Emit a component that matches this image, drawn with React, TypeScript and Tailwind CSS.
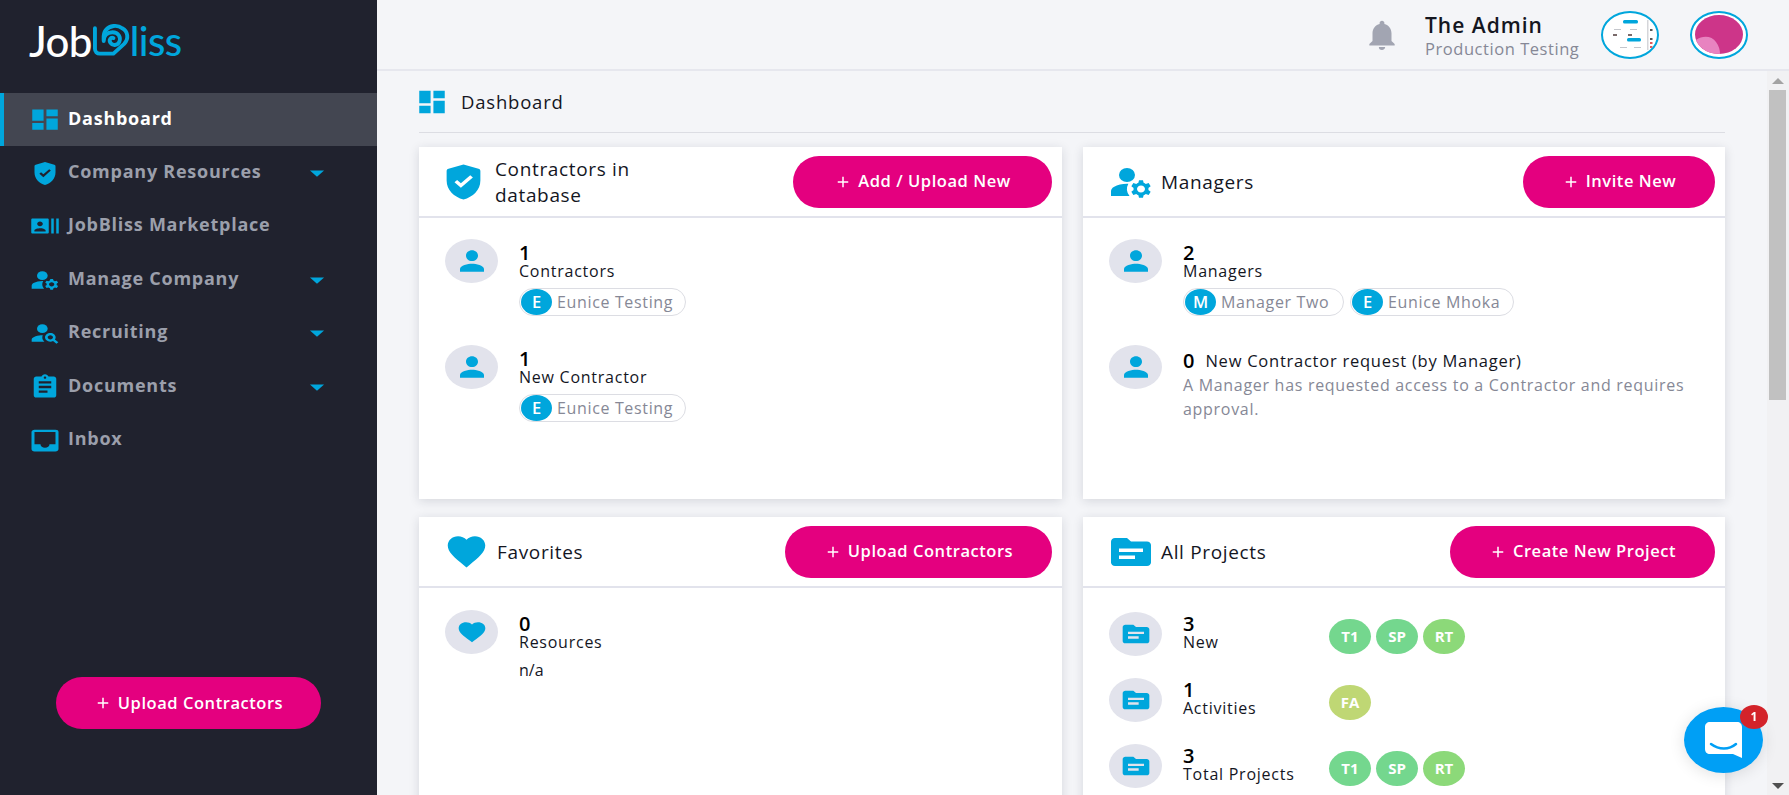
import React from "react";
import { MdDashboard, MdRecentActors, MdManageAccounts, MdPersonSearch, MdAssignment, MdInbox, MdArrowDropDown, MdNotifications, MdPerson, MdFavorite, MdTopic, MdAdd } from "react-icons/md";

const font = { fontFamily: '"Open Sans", "Noto Sans", sans-serif' };

function ShieldCheck(props: any) {
  return (
    <svg {...props} fill="currentColor">
      <path fillRule="evenodd" d="M12 1L20 3.6C20.6 3.8 21 4.3 21 5V11C21 17 17 21.5 12 23C7 21.5 3 17 3 11V5C3 4.3 3.4 3.8 4 3.6ZM10.6 15.6L7.2 12.2L8.6 10.8L10.6 12.8L15.6 7.8L17 9.2Z" />
    </svg>
  );
}

function Icon({ I, w, h, cls = "text-[#00a6dc]" }: { I: any; w: number; h: number; cls?: string }) {
  return <I preserveAspectRatio="none" viewBox="0 0 24 24" style={{ width: w, height: h }} className={`shrink-0 ${cls}`} />;
}

function NavItem({ I, label, active, arrow, w = 32, h = 28 }: { I: any; label: string; active?: boolean; arrow?: boolean; w?: number; h?: number }) {
  return (
    <div className={`relative flex h-[53.4px] items-center pl-[24px] ${active ? "bg-[#434651]" : ""}`}>
      {active && <div className="absolute inset-y-0 left-0 w-[4px] bg-[#00a6dc]" />}
      <div className="flex w-[44px] items-center justify-center pr-[3px]">
        <Icon I={I} w={w} h={h} />
      </div>
      <span className={`pb-[3px] text-[18px] font-bold tracking-[0.75px] ${active ? "text-white" : "text-[#9b9fab]"}`}>{label}</span>
      {arrow && (
        <div className="absolute left-[300px] top-1/2 -translate-y-1/2">
          <Icon I={MdArrowDropDown} w={34} h={30} />
        </div>
      )}
    </div>
  );
}

function PinkButton({ label, w }: { label: string; w: number }) {
  return (
    <button style={{ width: w }} className="flex h-[52px] shrink-0 items-center justify-center gap-[6px] rounded-full bg-[#e4007f] text-[16.5px] font-semibold tracking-[0.55px] text-white">
      <MdAdd className="h-[18px] w-[18px]" />
      {label}
    </button>
  );
}

function Circle({ I }: { I: any }) {
  const size = I === MdPerson ? [36, 32] : I === MdFavorite ? [32, 26] : [32, 28];
  return (
    <div className="flex h-[44px] w-[53px] shrink-0 items-center justify-center rounded-[50%] bg-[#e2e3ec]">
      <Icon I={I} w={size[0]} h={size[1]} />
    </div>
  );
}

function Chip({ letter, name, w }: { letter: string; name: string; w: number }) {
  return (
    <div style={{ width: w }} className="flex h-[28px] items-center rounded-full border border-[#dcdde3] pl-[1px]">
      <div className="flex h-[26px] w-[31px] items-center justify-center rounded-[50%] bg-[#00a6dc] text-[16.5px] font-semibold text-white">{letter}</div>
      <span className="ml-[5px] whitespace-nowrap text-[16px] tracking-[0.65px] text-[#868896]">{name}</span>
    </div>
  );
}

function Stat({ I, n, label, tight, children }: { I: any; n: string; label: string; tight?: boolean; children?: React.ReactNode }) {
  return (
    <div className="flex gap-[21px]">
      <Circle I={I} />
      <div className={tight ? "pt-[2px]" : "pt-[4px]"}>
        <div className="text-[20px] font-semibold leading-[19px] text-black">{n}</div>
        <div className="whitespace-nowrap text-[16px] leading-[19px] tracking-[0.75px] text-[#14161f]">{label}</div>
        {children}
      </div>
    </div>
  );
}

function Card({ title, I, iw, ih, gap, btn, btnW, px, children, titleCls = "" }: { title: string; I: any; iw: number; ih: number; gap: number; btn: string; btnW: number; px: number; children: React.ReactNode; titleCls?: string }) {
  return (
    <div className="h-[352px] bg-white shadow-[0_2px_10px_rgba(30,35,60,0.14)]">
      <div className="flex h-[71px] items-center justify-between border-b-2 border-[#e2e3ec] pr-[10px]" style={{ paddingLeft: px }}>
        <div className="flex items-center" style={{ gap }}>
          <Icon I={I} w={iw} h={ih} />
          <div className={`text-[19px] leading-[26px] tracking-[0.65px] text-[#14161f] ${titleCls}`}>{title}</div>
        </div>
        <PinkButton label={btn} w={btnW} />
      </div>
      {children}
    </div>
  );
}

function Tag({ t, c }: { t: string; c: string }) {
  return <div className={`flex h-[35px] w-[42px] items-center justify-center rounded-[50%] text-[15px] font-bold text-white ${c}`}>{t}</div>;
}

function ProjectRow({ n, label, tags }: { n: string; label: string; tags: [string, string][] }) {
  return (
    <div className="flex h-[66px] items-start">
      <div className="w-[167px]">
        <Stat I={MdTopic} n={n} label={label} tight />
      </div>
      <div className="flex gap-[5px] pt-[7px] pl-[53px]">
        {tags.map(([t, c]) => <Tag key={t} t={t} c={c} />)}
      </div>
    </div>
  );
}

const g = "bg-[#74d78e]";
const l = "bg-[#8cd979]";
const y = "bg-[#bfd774]";

export default function App() {
  return (
    <div style={font} className="flex h-[795px] w-[1789px] overflow-hidden bg-[#f4f5f8]">
      <aside className="flex w-[377px] shrink-0 flex-col bg-[#20222e]">
        <div className="flex h-[93px] items-start pl-[29px] pt-[19px]" aria-label="JobBliss">
          <span style={{ fontFamily: "Lato, sans-serif" }} className="text-[42px] font-medium leading-[44px] tracking-[-0.6px] text-white">Job</span>
          <svg width="37" height="33" viewBox="0 0 38 33" className="mt-[4px] ml-[1px] shrink-0" fill="none" stroke="#00a6dc" strokeWidth="4" strokeLinecap="round" strokeLinejoin="round">
            <path d="M2 5V26C2 29 4 31 7 31H21L32 21C37 16 36 8 30 5C25 1 17 2 13 7C10 11 11 15 11 18C11 12 15 9 20 9C26 9 29 14 27 19C25 23 20 23 18 20C16 17 18 14 21 15" />
          </svg>
          <span style={{ fontFamily: "Lato, sans-serif" }} className="text-[40px] font-medium leading-[44px] tracking-[-0.6px] text-[#00a6dc]">liss</span>
        </div>
        <nav>
          <NavItem I={MdDashboard} label="Dashboard" active w={34} h={27} />
          <NavItem I={ShieldCheck} label="Company Resources" arrow w={28} h={25} />
          <NavItem I={MdRecentActors} label="JobBliss Marketplace" w={30} h={26} />
          <NavItem I={MdManageAccounts} label="Manage Company" arrow w={32} h={26} />
          <NavItem I={MdPersonSearch} label="Recruiting" arrow w={32} h={26} />
          <NavItem I={MdAssignment} label="Documents" arrow w={30} h={28} />
          <NavItem I={MdInbox} label="Inbox" w={36} h={29} />
        </nav>
        <div className="mt-auto pb-[66px] pl-[56px]">
          <PinkButton label="Upload Contractors" w={265} />
        </div>
      </aside>

      <div className="flex min-w-0 flex-1 flex-col">
        <header className="flex h-[71px] shrink-0 items-center border-b-2 border-[#e6e7ee] pl-[986px]">
          <Icon I={MdNotifications} w={38} h={36} cls="text-[#a2a5b2]" />
          <div className="ml-[24px] w-[176px] pt-[4px]">
            <div className="text-[21px] font-semibold leading-[24px] tracking-[1px] text-[#14161f]">The Admin</div>
            <div className="whitespace-nowrap text-[16.5px] leading-[24px] tracking-[0.55px] text-[#868896]">Production Testing</div>
          </div>
          <div className="flex h-[48px] w-[58px] items-center justify-center overflow-hidden rounded-[50%] border-2 border-[#00a6dc] bg-white">
            <svg width="48" height="40" viewBox="0 0 48 40">
              <rect x="17" y="5" width="15" height="3.5" rx="1.5" fill="#00a6dc" />
              <rect x="21" y="23" width="14" height="3.5" rx="1.5" fill="#00a6dc" />
              <rect x="41" y="5" width="1.5" height="30" fill="#d5d6da" />
              <rect x="7" y="19" width="4" height="2" fill="#7a6a6a" />
              <rect x="22" y="19" width="4" height="2" fill="#7a6a6a" />
              <rect x="8" y="14" width="7" height="1" fill="#c4c6cc" />
              <rect x="24" y="14" width="7" height="1" fill="#c4c6cc" />
              <rect x="14" y="32" width="7" height="1" fill="#c4c6cc" />
              <rect x="28" y="32" width="7" height="1" fill="#c4c6cc" />
              <rect x="44" y="14" width="2.5" height="2" fill="#555" />
              <rect x="44" y="23" width="2.5" height="2" fill="#555" />
              <rect x="44" y="27" width="2.5" height="2" fill="#e05a5a" />
              <rect x="44" y="31" width="2.5" height="2" fill="#e05a5a" />
            </svg>
          </div>
          <div className="ml-[31px] flex h-[48px] w-[58px] items-center justify-center rounded-[50%] border-2 border-[#00a6dc] bg-white">
            <svg width="48" height="39" viewBox="0 0 48 39">
              <ellipse cx="24" cy="19.5" rx="24" ry="19.5" fill="#cd3589" />
              <path d="M1 25C8 20 17 21 21 27C24 31 25 35 25 39C15 39 5 35 1 25Z" fill="#e883c0" />
            </svg>
          </div>
        </header>

        <div className="relative flex min-h-0 flex-1">
          <main className="min-w-0 flex-1 overflow-hidden pl-[42px] pr-[42px]">
            <div className="flex h-[62px] items-center gap-[12px] border-b border-[#dcdde3]">
              <div className="-ml-[4px]"><Icon I={MdDashboard} w={34} h={30} /></div>
              <span className="text-[18.5px] tracking-[0.8px] text-[#14161f]">Dashboard</span>
            </div>
            <div className="mt-[14px] grid grid-cols-[643px_642px] gap-x-[21px] gap-y-[18px]">
              <Card title="Contractors in database" I={ShieldCheck} iw={45} ih={38} gap={9} btn="Add / Upload New" btnW={259} px={22} titleCls="w-[170px]">
                <div className="flex flex-col gap-[29px] px-[26px] pt-[21px]">
                  <Stat I={MdPerson} n="1" label="Contractors">
                    <div className="mt-[7px]"><Chip letter="E" name="Eunice Testing" w={167} /></div>
                  </Stat>
                  <Stat I={MdPerson} n="1" label="New Contractor">
                    <div className="mt-[7px]"><Chip letter="E" name="Eunice Testing" w={167} /></div>
                  </Stat>
                </div>
              </Card>
              <Card title="Managers" I={MdManageAccounts} iw={48} ih={42} gap={6} btn="Invite New" btnW={192} px={24}>
                <div className="flex flex-col gap-[29px] px-[26px] pt-[21px]">
                  <Stat I={MdPerson} n="2" label="Managers">
                    <div className="mt-[7px] flex gap-[6px]">
                      <Chip letter="M" name="Manager Two" w={161} />
                      <Chip letter="E" name="Eunice Mhoka" w={164} />
                    </div>
                  </Stat>
                  <div className="flex gap-[21px]">
                    <Circle I={MdPerson} />
                    <div className="w-[515px] pt-[5px]">
                      <div className="flex items-center gap-[11px] leading-[21px]">
                        <span className="text-[20px] font-semibold text-black">0</span>
                        <span className="text-[16.5px] tracking-[0.75px] text-[#14161f]">New Contractor request (by Manager)</span>
                      </div>
                      <div className="mt-[2px] text-[16px] leading-[24px] tracking-[0.7px] text-[#868896]">A Manager has requested access to a Contractor and requires approval.</div>
                    </div>
                  </div>
                </div>
              </Card>
              <Card title="Favorites" I={MdFavorite} iw={45} ih={41} gap={8} btn="Upload Contractors" btnW={267} px={25}>
                <div className="px-[26px] pt-[22px]">
                  <Stat I={MdFavorite} n="0" label="Resources">
                    <div className="mt-[9px] text-[16px] leading-[19px] text-[#14161f]">n/a</div>
                  </Stat>
                </div>
              </Card>
              <Card title="All Projects" I={MdTopic} iw={48} ih={42} gap={6} btn="Create New Project" btnW={265} px={24}>
                <div className="px-[26px] pt-[24px]">
                  <ProjectRow n="3" label="New" tags={[["T1", g], ["SP", g], ["RT", l]]} />
                  <ProjectRow n="1" label="Activities" tags={[["FA", y]]} />
                  <ProjectRow n="3" label="Total Projects" tags={[["T1", g], ["SP", g], ["RT", l]]} />
                </div>
              </Card>
            </div>
          </main>
          <div className="relative w-[22px] shrink-0 bg-[#f1f1f3]">
            <div className="absolute left-[2px] top-[19px] h-[310px] w-[17px] bg-[#c1c1c1]" />
            <div className="absolute left-[5px] top-[7px] h-0 w-0 border-x-[6px] border-b-[6px] border-x-transparent border-b-[#a3a3a3]" />
            <div className="absolute bottom-[6px] left-[5px] h-0 w-0 border-x-[6px] border-t-[6px] border-x-transparent border-t-[#505050]" />
          </div>
        </div>
      </div>

      <div className="fixed left-[1684px] top-[707px] flex h-[66px] w-[79px] items-center justify-center rounded-[50%] bg-[#009ff5] shadow-[0_2px_16px_rgba(0,0,0,0.12)]">
        <svg width="37" height="36" viewBox="0 0 37 36">
          <path d="M5 0H32C35 0 37 2 37 5V36L28 32H5C2 32 0 30 0 27V5C0 2 2 0 5 0Z" fill="#fff" />
          <path d="M6 22C14 28 24 28 31 22" stroke="#009ff5" strokeWidth="2.5" fill="none" strokeLinecap="round" />
        </svg>
        <div className="absolute left-[56px] top-[-2px] flex h-[24px] w-[28px] items-center justify-center rounded-[50%] bg-[#d3232a] text-[12px] font-bold text-white">1</div>
      </div>
    </div>
  );
}
